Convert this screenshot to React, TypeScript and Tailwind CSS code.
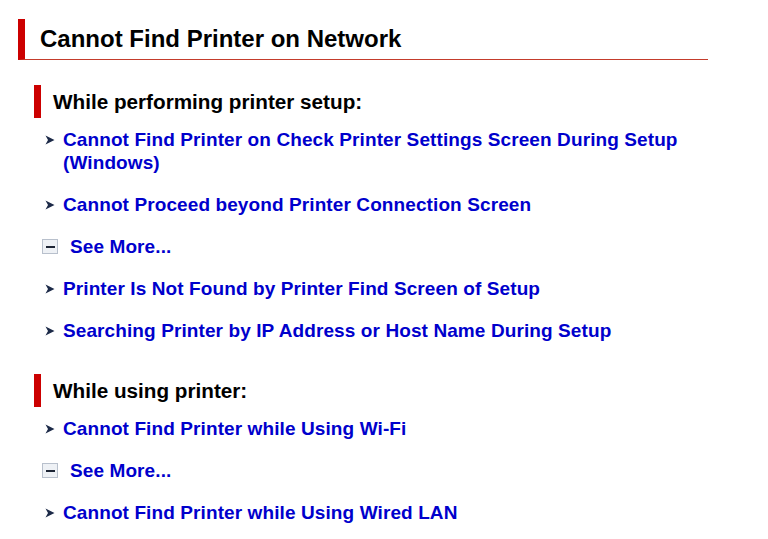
const setupLinks = [
  'Cannot Find Printer on Check Printer Settings Screen During Setup (Windows)',
  'Cannot Proceed beyond Printer Connection Screen',
  null,
  'Printer Is Not Found by Printer Find Screen of Setup',
  'Searching Printer by IP Address or Host Name During Setup',
];

const usingLinks = [
  'Cannot Find Printer while Using Wi-Fi',
  null,
  'Cannot Find Printer while Using Wired LAN',
];

function Arrow() {
  return (
    <svg width="10" height="10" viewBox="0 0 10 10" className="shrink-0 mt-[7px]">
      <path d="M0.5 0.5 L9.5 5 L0.5 9.5 L3 5 Z" fill="#1c2a48" />
    </svg>
  );
}

function LinkItem({ text }: { text: string }) {
  return (
    <li className="flex items-start gap-[8px] pl-[45px]">
      <Arrow />
      <a href="#" className="text-[#0000cc] font-bold text-[19px] leading-[23px] tracking-[0.1px]">
        {text}
      </a>
    </li>
  );
}

function SeeMore() {
  return (
    <li className="flex items-center gap-[12px] pl-[42px]">
      <span className="w-[16px] h-[15px] border border-[#b8c0cc] bg-[#eef1f5] flex items-center justify-center">
        <span className="w-[9px] h-[2px] bg-[#1c2434]" />
      </span>
      <a href="#" className="text-[#0000cc] font-bold text-[19px] leading-[23px] tracking-[0.1px]">
        See More...
      </a>
    </li>
  );
}

function Section({ title, links }: { title: string; links: (string | null)[] }) {
  return (
    <section>
      <h2 className="ml-[34px] h-[33px] border-l-[7px] border-[#cc0000] pl-[12px] flex items-center text-[20.7px] font-bold text-black">
        {title}
      </h2>
      <ul className="mt-[10px] flex flex-col gap-[19px]">
        {links.map((l, i) => (l ? <LinkItem key={i} text={l} /> : <SeeMore key={i} />))}
      </ul>
    </section>
  );
}

export default function App() {
  return (
    <div className="w-[768px] h-[539px] bg-white overflow-hidden pt-[19px]" style={{ fontFamily: '"Liberation Sans", Arial, sans-serif' }}>
      <h1 className="ml-[18px] w-[690px] h-[41px] border-l-[7px] border-l-[#cc0000] border-b border-b-[#c43c2c] pl-[15px] flex items-center text-[24px] font-bold text-black">
        Cannot Find Printer on Network
      </h1>
      <div className="mt-[25px] w-[708px] flex flex-col gap-[32px]">
        <Section title="While performing printer setup:" links={setupLinks} />
        <Section title="While using printer:" links={usingLinks} />
      </div>
    </div>
  );
}
